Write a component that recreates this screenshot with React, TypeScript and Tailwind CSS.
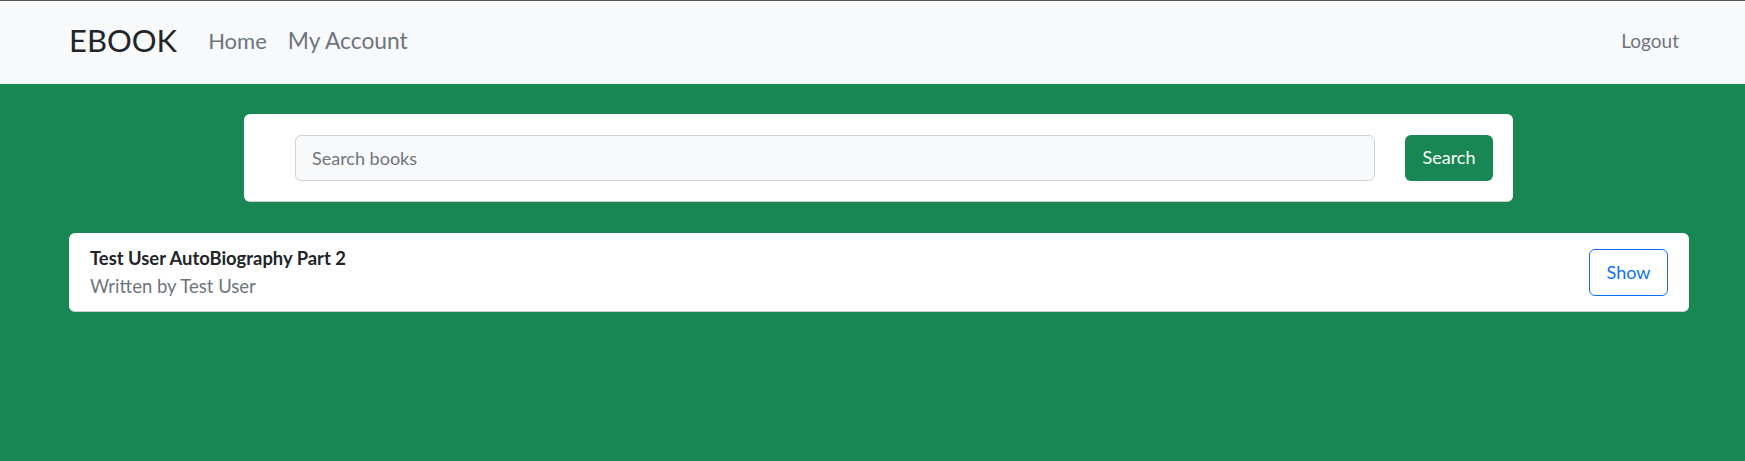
export default function App() {
  return (
    <div className="min-h-screen bg-[#198754] font-['Lato','Open_Sans',sans-serif]">
      <nav className="h-[84px] border-t border-[#555] bg-[#f8f9fa] flex items-center pl-[69px] pr-[66px] pb-[4px]">
        <a className="text-[31px] text-[#212529] leading-none">EBOOK</a>
        <a className="ml-[31px] text-[22px] text-[#6c757d] leading-none">Home</a>
        <a className="ml-[21px] text-[22.8px] text-[#6c757d] leading-none">My Account</a>
        <a className="ml-auto text-[19px] text-[#6c757d] leading-none">Logout</a>
      </nav>

      <div className="mt-[30px] ml-[244px] w-[1269px] h-[88px] bg-white rounded-md border-b border-[#d0d0d0] flex items-center gap-[30px] pl-[51px] pr-[20px]">
        <input
          className="flex-1 h-[46px] bg-[#f8f9fa] border border-[#ced4da] rounded-md px-[16px] text-[18px] text-[#212529] placeholder:text-[#6c757d] outline-none"
          placeholder="Search books"
        />
        <button className="w-[88px] h-[46px] bg-[#198754] text-white text-[18px] rounded-md">Search</button>
      </div>

      <div className="mt-[31px] ml-[69px] mr-[56px] h-[79px] bg-white rounded-md border-b border-[#d0d0d0] flex items-center justify-between pl-[21px] pr-[21px]">
        <div className="flex flex-col">
          <span className="text-[18.4px] font-bold text-[#212529] leading-[28px]">Test User AutoBiography Part 2</span>
          <span className="text-[18.5px] text-[#6c757d] leading-[28px]">Written by Test User</span>
        </div>
        <button className="w-[79px] h-[47px] border border-[#0d6efd] text-[#0d6efd] text-[18px] rounded-md">Show</button>
      </div>
    </div>
  )
}
